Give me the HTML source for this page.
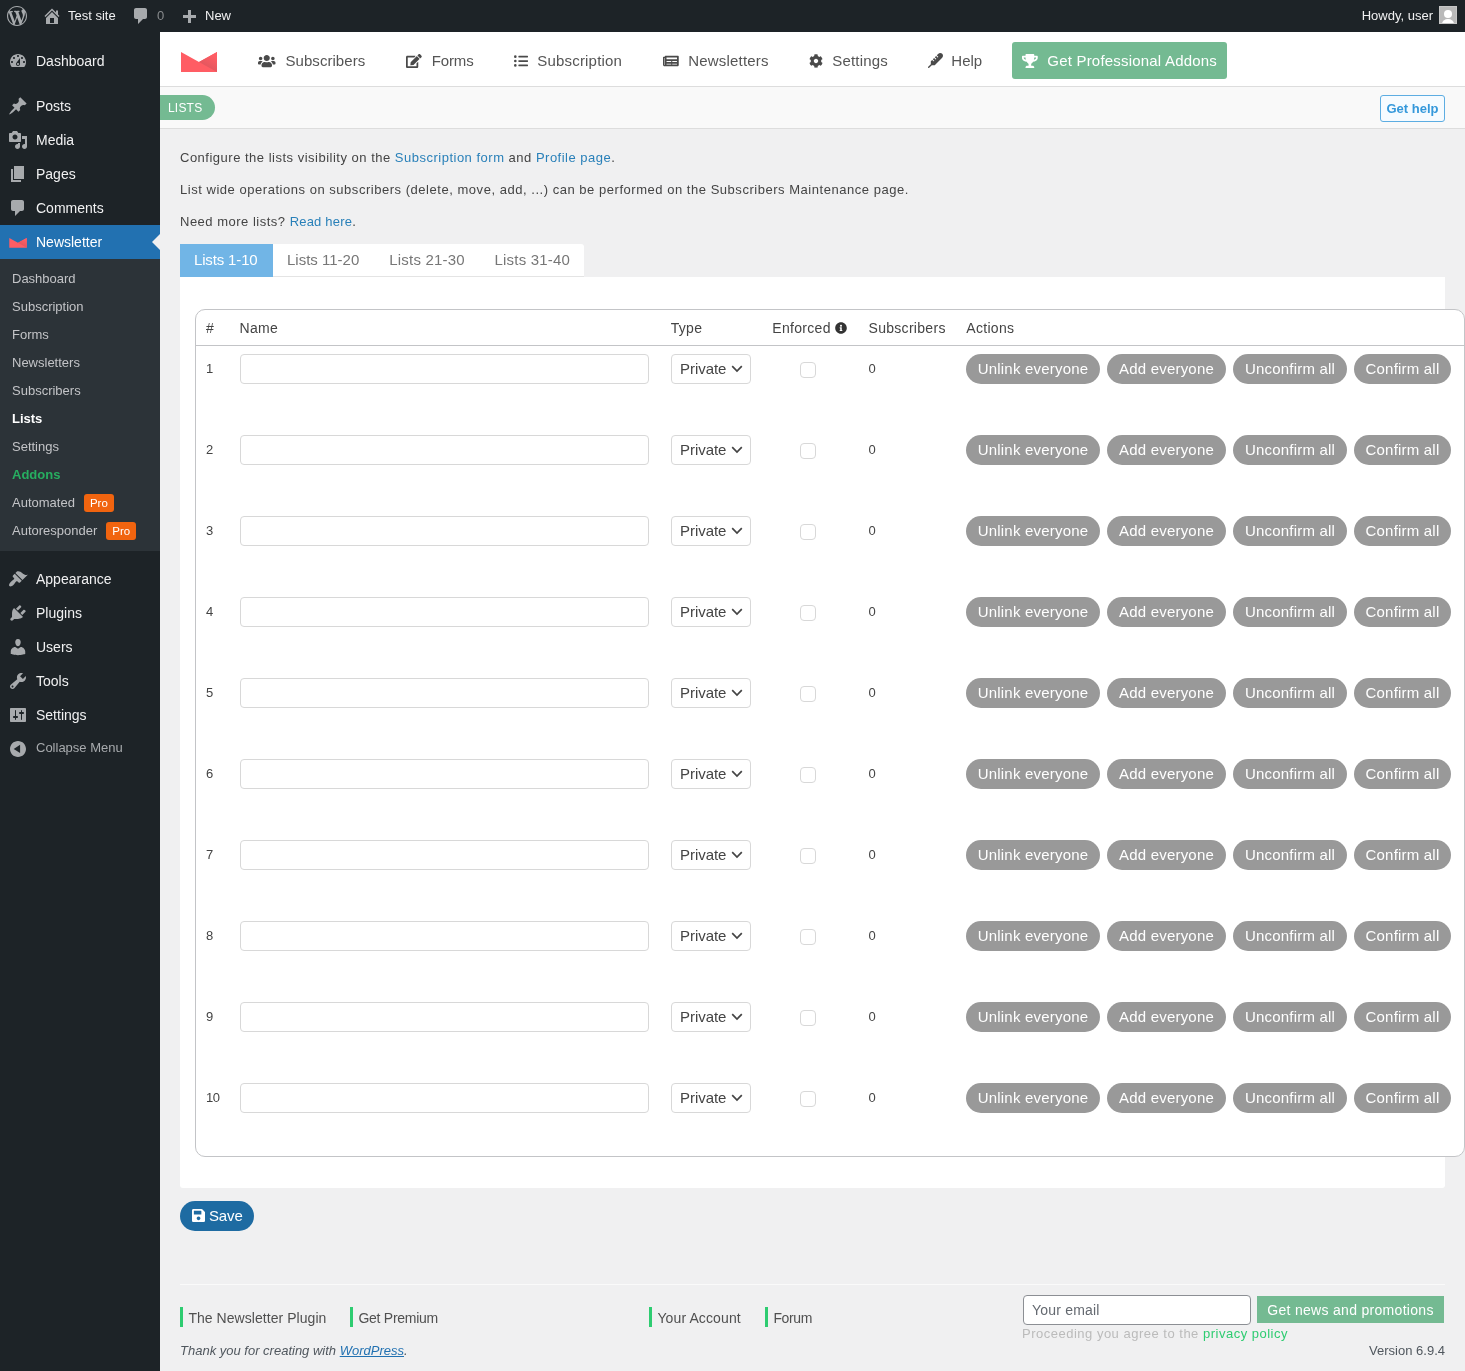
<!DOCTYPE html>
<html>
<head>
<meta charset="utf-8">
<title>Lists</title>
<style>
*{box-sizing:border-box;}
html,body{margin:0;padding:0;}
body{width:1465px;height:1371px;overflow:hidden;background:#f0f0f1;font-family:"Liberation Sans",sans-serif;font-size:13px;line-height:18px;color:#3c434a;position:relative;}
#w{position:absolute;left:0;top:0;width:1465px;height:1371px;will-change:transform;}
svg{display:block;}
.abs{position:absolute;}
#bar{position:absolute;left:0;top:0;width:1465px;height:32px;background:#1d2327;color:#f0f0f1;font-size:13px;line-height:32px;}
#bar .t{position:absolute;top:0;white-space:nowrap;}
#bar svg{fill:#a7aaad;}
#menu{position:absolute;left:0;top:32px;width:160px;height:1339px;background:#1d2327;}
.mi{position:absolute;left:0;width:160px;height:34px;color:#f0f0f1;font-size:14px;line-height:34px;}
.mi span{position:absolute;left:36px;top:0;white-space:nowrap;}
.mi svg{fill:#a7aaad;}
.mi.cur{background:#2271b1;color:#fff;}
#sub{position:absolute;left:0;top:227px;width:160px;height:292px;background:#2c3338;}
.si{position:absolute;left:12px;height:28px;line-height:28px;font-size:13px;color:#c3c4c7;white-space:nowrap;}
.pro{display:inline-block;background:#f1640f;color:#fff;font-size:11.5px;line-height:18px;height:18px;padding:0 6px;border-radius:3px;margin-left:9px;vertical-align:0px;}
#hdr{position:absolute;left:160px;top:32px;width:1305px;height:55px;background:#fff;border-bottom:1px solid #ddd;}
.hm{position:absolute;top:0;height:55px;line-height:57px;font-size:15px;color:#555;white-space:nowrap;letter-spacing:0.2px;}
#sh{position:absolute;left:160px;top:87px;width:1305px;height:42px;background:#f9f9f9;border-bottom:1px solid #ddd;}
.p{position:absolute;left:180px;font-size:13px;line-height:15px;color:#444;white-space:nowrap;letter-spacing:0.5px;}
.p a{color:#2980b9;}
.tab{top:244px;font-size:15px;line-height:32px;height:33px;color:#777;white-space:nowrap;letter-spacing:0.2px;}
.th{position:absolute;top:319px;font-size:14px;line-height:18px;color:#444;white-space:nowrap;letter-spacing:0.3px;}
.td{position:absolute;font-size:13px;line-height:20px;color:#444;white-space:nowrap;}
.inp{position:absolute;height:30px;border:1px solid #d8d8d8;border-radius:4px;background:#fff;}
.sel span{position:absolute;left:8px;top:0;font-size:15px;line-height:28px;color:#444;letter-spacing:-0.05px;}
.cb{position:absolute;width:16px;height:16px;border:1px solid #d8d8d8;border-radius:4px;background:#fff;}
.btn{position:absolute;height:30px;border-radius:15px;background:#999;color:#fff;font-size:15px;line-height:30px;text-align:center;white-space:nowrap;letter-spacing:0.2px;}
.fl{position:absolute;top:1308.5px;font-size:14px;line-height:19px;color:#505050;white-space:nowrap;letter-spacing:0.05px;}

</style>
</head>
<body>
<div id="w">
<div id="bar">
<svg viewBox="0 0 20 20" style="position:absolute;left:7px;top:6px;width:20px;height:20px;"><path d="M20 10c0-5.51-4.49-10-10-10C4.48 0 0 4.49 0 10c0 5.52 4.48 10 10 10 5.51 0 10-4.48 10-10zM7.78 15.37L4.37 6.22c.55-.02 1.17-.08 1.17-.08.5-.06.44-1.13-.06-1.11 0 0-1.45.11-2.37.11-.18 0-.37 0-.58-.01C4.12 2.69 6.87 1.11 10 1.11c2.33 0 4.45.87 6.05 2.34-.68-.11-1.65.39-1.65 1.58 0 .74.45 1.36.9 2.1.35.61.55 1.36.55 2.46 0 1.49-1.4 5-1.4 5l-3.03-8.37c.54-.02.82-.17.82-.17.5-.05.44-1.25-.06-1.22 0 0-1.44.12-2.38.12-.87 0-2.33-.12-2.33-.12-.5-.03-.56 1.2-.06 1.22l.92.08 1.26 3.41zM17.41 10c.24-.64.74-1.87.43-4.25.7 1.29 1.05 2.71 1.05 4.25 0 3.29-1.73 6.24-4.4 7.78.97-2.59 1.94-5.2 2.92-7.78zM6.1 18.09C3.12 16.65 1.11 13.53 1.11 10c0-1.3.23-2.48.72-3.59C3.25 10.3 4.67 14.2 6.1 18.09zm4.03-6.63l2.58 6.98c-.86.29-1.76.45-2.71.45-.79 0-1.57-.11-2.29-.33.81-2.38 1.62-4.74 2.42-7.1z"/></svg>
<svg viewBox="0 0 20 20" style="position:absolute;left:42px;top:6px;width:20px;height:20px;"><path d="M16 8.5l1.53 1.53-1.06 1.06L10 4.62l-6.47 6.47-1.06-1.06L10 2.5l4 4v-2h2v4zm-6-2.46l6 5.99V18H4v-5.97zM12 17v-5H8v5h4z"/></svg>
<span class="t" style="left:68px">Test site</span>
<svg viewBox="0 0 20 20" style="position:absolute;left:131px;top:6px;width:20px;height:20px;"><path d="M5 2h9c1.1 0 2 .9 2 2v7c0 1.1-.9 2-2 2h-2l-5 5v-5H5c-1.1 0-2-.9-2-2V4c0-1.1.9-2 2-2z"/></svg>
<span class="t" style="left:157px;color:#878a8c">0</span>
<svg viewBox="0 0 20 20" style="position:absolute;left:179px;top:8px;width:20px;height:20px;"><path d="M17 7v3h-5v5H9v-5H4V7h5V2h3v5h5z"/></svg>
<span class="t" style="left:205px">New</span>
<span class="t" style="right:32px">Howdy, user</span>
<div class="abs" style="left:1439px;top:6px;width:18px;height:18px;background:#b9b9b9;border:1px solid #c6c6c6;overflow:hidden"><div class="abs" style="left:3.9px;top:3.4px;width:7.8px;height:7.8px;border-radius:50%;background:#fff"></div><div class="abs" style="left:1.6px;top:12.2px;width:12.4px;height:10px;border-radius:50%;background:#fff"></div></div>
</div>
<div id="menu">
<div class="mi" style="top:12px"><svg viewBox="0 0 20 20" style="position:absolute;left:8px;top:7px;width:20px;height:20px;"><path d="M3.76 16h12.48c1.1-1.37 1.76-3.11 1.76-5 0-4.42-3.58-8-8-8s-8 3.58-8 8c0 1.89.66 3.63 1.76 5zM10 4c.55 0 1 .45 1 1s-.45 1-1 1-1-.45-1-1 .45-1 1-1zM6 6c.55 0 1 .45 1 1s-.45 1-1 1-1-.45-1-1 .45-1 1-1zm8 0c.55 0 1 .45 1 1s-.45 1-1 1-1-.45-1-1 .45-1 1-1zm-5.37 5.55L12 7v6c0 1.1-.9 2-2 2s-2-.9-2-2c0-.57.24-1.08.63-1.45zM4 10c.55 0 1 .45 1 1s-.45 1-1 1-1-.45-1-1 .45-1 1-1zm12 0c.55 0 1 .45 1 1s-.45 1-1 1-1-.45-1-1 .45-1 1-1zm-5 3c0-.55-.45-1-1-1s-1 .45-1 1 .45 1 1 1 1-.45 1-1z"/></svg><span>Dashboard</span></div>
<div class="mi" style="top:57px"><svg viewBox="0 0 20 20" style="position:absolute;left:8px;top:7px;width:20px;height:20px;"><path d="M10.44 3.02l1.82-1.82 6.36 6.35-1.83 1.82c-1.05-.68-2.48-.57-3.41.36l-.75.75c-.92.93-1.04 2.35-.35 3.41l-1.83 1.82-2.41-2.41-2.8 2.79c-.42.42-3.38 2.71-3.8 2.29s1.86-3.39 2.28-3.81l2.79-2.79L4.1 9.36l1.83-1.82c1.05.69 2.48.57 3.4-.36l.75-.75c.93-.92 1.05-2.35.36-3.41z"/></svg><span>Posts</span></div>
<div class="mi" style="top:91px"><svg viewBox="0 0 20 20" style="position:absolute;left:8px;top:7px;width:20px;height:20px;"><path d="M13 11V4c0-.55-.45-1-1-1h-1.67L9 1H5L3.67 3H2c-.55 0-1 .45-1 1v7c0 .55.45 1 1 1h10c.55 0 1-.45 1-1zM7 4.5c1.38 0 2.5 1.12 2.5 2.5S8.38 9.5 7 9.5 4.5 8.38 4.5 7 5.62 4.5 7 4.5zM14 6h5v10.5c0 1.38-1.12 2.5-2.5 2.5S14 17.88 14 16.5s1.12-2.5 2.5-2.5c.17 0 .34.02.5.05V9h-3V6zm-4 8.05V13h2v3.500c0 1.380-1.120 2.500-2.500 2.500S7 17.880 7 16.500 8.120 14 9.500 14c.170 0 .340.020.500.050z"/></svg><span>Media</span></div>
<div class="mi" style="top:125px"><svg viewBox="0 0 20 20" style="position:absolute;left:8px;top:7px;width:20px;height:20px;"><path d="M6 15V2h10v13H6zm-1 1h8v2H3V5h2v11z"/></svg><span>Pages</span></div>
<div class="mi" style="top:159px"><svg viewBox="0 0 20 20" style="position:absolute;left:8px;top:7px;width:20px;height:20px;"><path d="M5 2h9c1.1 0 2 .9 2 2v7c0 1.1-.9 2-2 2h-2l-5 5v-5H5c-1.1 0-2-.9-2-2V4c0-1.1.9-2 2-2z"/></svg><span>Comments</span></div>
<div class="mi cur" style="top:193px"><svg viewBox="0 0 36 20" style="position:absolute;left:9px;top:13.4px;width:18px;height:9.7px"><path d="M0 0L18 10L36 0V20H0Z" fill="#ff5d64"/><path d="M18 10L36 0V20Z" fill="url(#lg)"/></svg><span>Newsletter</span><div class="abs" style="right:0;top:9px;width:0;height:0;border:8px solid transparent;border-right-color:#f0f0f1"></div></div>
<div id="sub">
<div class="si" style="top:6px;">Dashboard</div>
<div class="si" style="top:34px;">Subscription</div>
<div class="si" style="top:62px;">Forms</div>
<div class="si" style="top:90px;">Newsletters</div>
<div class="si" style="top:118px;">Subscribers</div>
<div class="si" style="top:146px;color:#fff;font-weight:bold;">Lists</div>
<div class="si" style="top:174px;">Settings</div>
<div class="si" style="top:202px;color:#27ae60;font-weight:bold;">Addons</div>
<div class="si" style="top:230px;">Automated<span class="pro">Pro</span></div>
<div class="si" style="top:258px;">Autoresponder<span class="pro">Pro</span></div>
</div>
<div class="mi" style="top:530px"><svg viewBox="0 0 20 20" style="position:absolute;left:8px;top:7px;width:20px;height:20px;"><path d="M14.480 11.060L7.410 3.990l1.500-1.500c.5-.56 2.300-.47 3.510.32 1.210.8 1.430 1.280 2.910 2.100 1.180.64 2.450 1.260 4.450.85zm-.71.71L6.700 4.700 4.930 6.470c-.39.39-.39 1.020 0 1.410l1.060 1.060c.39.39.39 1.030 0 1.420-.6.6-1.430 1.110-2.210 1.690-.35.26-.7.53-1.010.84C1.430 14.230.4 16.080 1.400 17.070c.99 1 2.840-.03 4.180-1.360.31-.31.58-.66.85-1.020.57-.78 1.080-1.610 1.690-2.210.39-.39 1.020-.39 1.410 0l1.060 1.060c.39.39 1.020.39 1.410 0z"/></svg><span>Appearance</span></div>
<div class="mi" style="top:564px"><svg viewBox="0 0 20 20" style="position:absolute;left:8px;top:7px;width:20px;height:20px;"><path d="M13.110 4.360L9.870 7.600 8 5.730l3.240-3.240c.35-.34 1.050-.2 1.560.32.52.51.66 1.210.31 1.550zm-8 1.770l.91-1.120 9.010 9.010-1.190.84c-.71.71-2.630 1.160-3.820 1.160H6.140L4.900 17.260c-.59.59-1.540.59-2.120 0-.59-.58-.59-1.530 0-2.120l1.240-1.240v-3.880c0-1.130.4-3.190 1.090-3.890zm7.260 3.970l3.240-3.240c.34-.35 1.040-.21 1.550.31.52.51.66 1.210.31 1.550l-3.240 3.250z"/></svg><span>Plugins</span></div>
<div class="mi" style="top:598px"><svg viewBox="0 0 20 20" style="position:absolute;left:8px;top:7px;width:20px;height:20px;"><path d="M10 9.250c-2.270 0-2.730-3.440-2.730-3.440C7 4.020 7.820 2 9.970 2c2.160 0 2.980 2.020 2.710 3.810 0 0-.41 3.440-2.680 3.440zm0 2.570L12.720 10c2.390 0 4.520 2.330 4.520 4.530v2.490s-3.650 1.130-7.240 1.130c-3.650 0-7.240-1.130-7.240-1.130v-2.490c0-2.250 1.940-4.480 4.470-4.480z"/></svg><span>Users</span></div>
<div class="mi" style="top:632px"><svg viewBox="0 0 20 20" style="position:absolute;left:8px;top:7px;width:20px;height:20px;"><path d="M16.680 9.770c-1.340 1.340-3.300 1.670-4.950.99l-5.410 6.520c-.99.99-2.590.99-3.580 0s-.99-2.590 0-3.570l6.520-5.420c-.68-1.650-.35-3.610.99-4.950 1.280-1.280 3.120-1.620 4.720-1.060l-2.890 2.890 2.820 2.820 2.860-2.870c.53 1.580.18 3.390-1.080 4.650zM3.810 16.210c.4.39 1.040.39 1.430 0 .4-.4.4-1.040 0-1.430-.39-.4-1.030-.4-1.430 0-.39.39-.39 1.030 0 1.430z"/></svg><span>Tools</span></div>
<div class="mi" style="top:666px"><svg viewBox="0 0 20 20" style="position:absolute;left:8px;top:7px;width:20px;height:20px;"><path d="M18 16V4c0-.55-.45-1-1-1H3c-.55 0-1 .45-1 1v12c0 .55.45 1 1 1h14c.55 0 1-.45 1-1zM8 11h1c.55 0 1 .45 1 1s-.45 1-1 1H8v1.500c0 .28-.22.5-.5.5s-.5-.22-.5-.5V13H6c-.55 0-1-.45-1-1s.45-1 1-1h1V5.500c0-.28.22-.5.5-.5s.5.22.5.5V11zm5-2h-1c-.55 0-1-.45-1-1s.45-1 1-1h1V5.500c0-.28.22-.5.5-.5s.5.22.5.5V7h1c.55 0 1 .45 1 1s-.45 1-1 1h-1v5.500c0 .28-.22.5-.5.5s-.5-.22-.5-.5V9z"/></svg><span>Settings</span></div>
<div class="mi" style="top:699px;color:#a7aaad;font-size:13px"><svg viewBox="0 0 20 20" style="position:absolute;left:8px;top:8px;width:20px;height:20px;"><path d="M10 2.02c-4.42 0-8 3.58-8 8s3.58 8 8 8 8-3.58 8-8-3.58-8-8-8zM12.1 14l-6.4-4.1 6.4-4.1v8.2z"/></svg><span>Collapse Menu</span></div>
</div>
<div id="hdr">
<svg viewBox="0 0 36 20" style="position:absolute;left:21px;top:20px;width:36px;height:20px"><defs><linearGradient id="lg" gradientUnits="userSpaceOnUse" x1="27" y1="15" x2="33" y2="4"><stop offset="0" stop-color="#e4575f"/><stop offset="1" stop-color="#ff5d64"/></linearGradient></defs><path d="M0 0L18 10L36 0V20H0Z" fill="#ff5d64"/><path d="M18 10L36 0V20Z" fill="url(#lg)"/></svg>
<svg viewBox="0 0 640 512" style="position:absolute;left:98px;top:21.5px;width:17.5px;height:14px;fill:#4a4a4a;"><path d="M96 224c35.300 0 64-28.700 64-64s-28.700-64-64-64-64 28.700-64 64 28.700 64 64 64zm448 0c35.300 0 64-28.700 64-64s-28.700-64-64-64-64 28.700-64 64 28.700 64 64 64zm32 32h-64c-17.600 0-33.500 7.100-45.100 18.600 40.300 22.100 68.900 62 75.100 109.400h66c17.700 0 32-14.300 32-32v-32c0-35.300-28.700-64-64-64zm-256 0c61.900 0 112-50.100 112-112S381.900 32 320 32 208 82.100 208 144s50.100 112 112 112zm76.800 32h-8.300c-20.800 10-43.900 16-68.500 16s-47.600-6-68.500-16h-8.300C179.600 288 128 339.600 128 403.200V432c0 26.500 21.500 48 48 48h288c26.500 0 48-21.500 48-48v-28.800c0-63.600-51.600-115.200-115.200-115.200zm-223.700-13.400C161.500 263.100 145.600 256 128 256H64c-35.300 0-64 28.700-64 64v32c0 17.700 14.300 32 32 32h65.900c6.300-47.400 34.900-87.300 75.200-109.400z"/></svg>
<span class="hm" style="left:125.5px;letter-spacing:0.05px">Subscribers</span>
<svg viewBox="0 0 576 512" style="position:absolute;left:246px;top:21.5px;width:15.75px;height:14px;fill:#4a4a4a;"><path d="M402.600 83.200l90.200 90.200c3.800 3.800 3.800 10 0 13.800L274.400 405.600l-92.800 10.300c-12.400 1.400-22.900-9.100-21.500-21.500l10.300-92.800L388.800 83.200c3.800-3.800 10-3.800 13.800 0zm162-22.900l-48.800-48.800c-15.200-15.200-39.900-15.200-55.200 0l-35.400 35.400c-3.800 3.800-3.800 10 0 13.800l90.200 90.200c3.800 3.800 10 3.800 13.800 0l35.400-35.400c15.200-15.300 15.200-40 0-55.200zM384 346.200V448H64V128h229.800c3.200 0 6.200-1.300 8.500-3.500l40-40c7.600-7.600 2.200-20.500-8.500-20.500H48C21.500 64 0 85.500 0 112v352c0 26.500 21.500 48 48 48h352c26.500 0 48-21.500 48-48V306.200c0-10.700-12.900-16-20.500-8.500l-40 40c-2.200 2.300-3.500 5.300-3.500 8.500z"/></svg>
<span class="hm" style="left:271.7px;letter-spacing:-0.12px">Forms</span>
<svg viewBox="0 0 512 512" style="position:absolute;left:354px;top:21.5px;width:14.0px;height:14px;fill:#4a4a4a;"><path d="M48 48a48 48 0 1 0 48 48 48 48 0 0 0-48-48zm0 160a48 48 0 1 0 48 48 48 48 0 0 0-48-48zm0 160a48 48 0 1 0 48 48 48 48 0 0 0-48-48zm448 16H176a16 16 0 0 0-16 16v32a16 16 0 0 0 16 16h320a16 16 0 0 0 16-16v-32a16 16 0 0 0-16-16zm0-320H176a16 16 0 0 0-16 16v32a16 16 0 0 0 16 16h320a16 16 0 0 0 16-16V80a16 16 0 0 0-16-16zm0 160H176a16 16 0 0 0-16 16v32a16 16 0 0 0 16 16h320a16 16 0 0 0 16-16v-32a16 16 0 0 0-16-16z"/></svg>
<span class="hm" style="left:377.20000000000005px;letter-spacing:0.2px">Subscription</span>
<svg viewBox="0 0 576 512" style="position:absolute;left:503px;top:21.5px;width:15.75px;height:14px;fill:#4a4a4a;"><path d="M552 64H88c-13.255 0-24 10.745-24 24v8H24c-13.255 0-24 10.745-24 24v272c0 30.928 25.072 56 56 56h472c26.510 0 48-21.490 48-48V88c0-13.255-10.745-24-24-24zM56 400a8 8 0 0 1-8-8V144h16v248a8 8 0 0 1-8 8zm236-16H140c-6.627 0-12-5.373-12-12v-8c0-6.627 5.373-12 12-12h152c6.627 0 12 5.373 12 12v8c0 6.627-5.373 12-12 12zm208 0H348c-6.627 0-12-5.373-12-12v-8c0-6.627 5.373-12 12-12h152c6.627 0 12 5.373 12 12v8c0 6.627-5.373 12-12 12zm-208-96H140c-6.627 0-12-5.373-12-12v-8c0-6.627 5.373-12 12-12h152c6.627 0 12 5.373 12 12v8c0 6.627-5.373 12-12 12zm208 0H348c-6.627 0-12-5.373-12-12v-8c0-6.627 5.373-12 12-12h152c6.627 0 12 5.373 12 12v8c0 6.627-5.373 12-12 12zm0-96H140c-6.627 0-12-5.373-12-12v-40c0-6.627 5.373-12 12-12h360c6.627 0 12 5.373 12 12v40c0 6.627-5.373 12-12 12z"/></svg>
<span class="hm" style="left:528.2px;letter-spacing:0.2px">Newsletters</span>
<svg viewBox="0 0 512 512" style="position:absolute;left:649px;top:21.5px;width:14.0px;height:14px;fill:#4a4a4a;"><path d="M487.400 315.700l-42.600-24.600c4.300-23.200 4.300-47 0-70.200l42.600-24.600c4.900-2.800 7.100-8.600 5.500-14-11.100-35.600-30-67.800-54.700-94.600-3.800-4.100-10-5.100-14.800-2.300L380.800 110c-17.900-15.400-38.500-27.300-60.800-35.100V25.800c0-5.600-3.900-10.500-9.400-11.700-36.700-8.200-74.300-7.800-109.200 0-5.500 1.200-9.400 6.100-9.400 11.700V75c-22.200 7.900-42.800 19.800-60.800 35.100L88.700 85.500c-4.900-2.800-11-1.900-14.800 2.300-24.700 26.700-43.600 58.900-54.700 94.600-1.700 5.400.6 11.200 5.500 14L67.300 221c-4.300 23.200-4.300 47 0 70.200l-42.600 24.600c-4.900 2.800-7.100 8.600-5.500 14 11.100 35.600 30 67.800 54.700 94.600 3.800 4.100 10 5.100 14.800 2.300l42.600-24.600c17.900 15.400 38.500 27.300 60.800 35.100v49.200c0 5.600 3.900 10.500 9.400 11.700 36.700 8.200 74.300 7.800 109.200 0 5.500-1.200 9.400-6.100 9.400-11.700v-49.200c22.200-7.900 42.800-19.800 60.800-35.100l42.600 24.600c4.900 2.800 11 1.900 14.800-2.300 24.700-26.700 43.600-58.900 54.700-94.600 1.500-5.500-.7-11.300-5.600-14.100zM256 336c-44.100 0-80-35.900-80-80s35.900-80 80-80 80 35.900 80 80-35.900 80-80 80z"/></svg>
<span class="hm" style="left:672.2px;letter-spacing:0.2px">Settings</span>
<svg viewBox="0 0 512 512" style="position:absolute;left:767.8px;top:20.8px;width:15.0px;height:15px;fill:#4a4a4a;"><path d="M476.8 20.4c-37.5-30.7-95.5-26.3-131.9 10.2l-45.7 46 50.5 50.5c3.100 3.100 3.100 8.200 0 11.300l-11.300 11.300c-3.100 3.100-8.200 3.100-11.300 0l-50.400-50.500-45.100 45.400 50.300 50.400c3.100 3.100 3.100 8.200 0 11.300l-11.300 11.300c-3.100 3.100-8.200 3.100-11.300 0L209 167.400l-45.100 45.400L214 263c3.100 3.100 3.100 8.200 0 11.300l-11.300 11.300c-3.100 3.100-8.200 3.100-11.300 0l-50.100-50.200L96 281.100V382L7 471c-9.400 9.400-9.400 24.600 0 33.900 9.400 9.400 24.600 9.400 33.900 0l89-89h99.900L484 162.600c34.900-34.900 42.200-101.500-7.200-142.200z"/></svg>
<span class="hm" style="left:791.3px;letter-spacing:0.0px">Help</span>
<div class="abs" style="left:852px;top:10px;width:215px;height:37px;background:#74ba92;border-radius:3px;color:#fff;font-size:15px;line-height:37px;white-space:nowrap"><svg viewBox="0 0 576 512" style="position:absolute;left:10.1px;top:12px;width:15.75px;height:14px;fill:#fff;"><path d="M552 64H448V24c0-13.300-10.700-24-24-24H152c-13.300 0-24 10.700-24 24v40H24C10.700 64 0 74.700 0 88v56c0 35.700 22.500 72.400 61.900 100.700 31.500 22.700 69.800 37.100 110 41.700C203.300 338.500 240 360 240 360v72h-48c-35.300 0-64 20.700-64 56v12c0 6.600 5.400 12 12 12h296c6.600 0 12-5.400 12-12v-12c0-35.300-28.700-56-64-56h-48v-72s36.700-21.500 68.100-73.600c40.300-4.600 78.600-19 110-41.700 39.300-28.300 61.900-65 61.900-100.700V88c0-13.300-10.700-24-24-24zM99.300 192.800C74.900 175.200 64 155.600 64 144v-16h64.200c1 32.600 5.800 61.200 12.800 86.200-15.100-5.200-29.200-12.400-41.700-21.400zM512 144c0 16.100-17.700 36.100-35.300 48.800-12.500 9-26.700 16.200-41.800 21.400 7-25 11.800-53.600 12.800-86.200H512v16z"/></svg><span class="abs" style="left:35.3px;top:0;letter-spacing:0.2px">Get Professional Addons</span></div>
</div>
<div id="sh"><div class="abs" style="left:0;top:8px;width:55px;height:25px;background:#74ba92;border-radius:0 13px 13px 0;color:#fff;font-size:12px;line-height:26px;padding-left:8px;letter-spacing:0.2px">LISTS</div><div class="abs" style="left:1220px;top:8px;width:65px;height:27px;border:1px solid #5dade2;border-radius:3px;background:#f6fbff;color:#3498db;font-weight:bold;font-size:13px;line-height:25px;text-align:center">Get help</div></div>
<div class="p" style="top:150px">Configure the lists visibility on the <a>Subscription form</a> and <a>Profile page</a>.</div>
<div class="p" style="top:182px;letter-spacing:0.53px">List wide operations on subscribers (delete, move, add, ...) can be performed on the Subscribers Maintenance page.</div>
<div class="p" style="top:214px">Need more lists? <a style="letter-spacing:0.2px">Read here</a>.</div>
<div class="abs" style="left:180px;top:244px;width:404px;height:33px;background:#fff;border-bottom:1px solid #e4e4e4;border-radius:0 3px 0 0"></div>
<div class="abs" style="left:180px;top:244px;width:93px;height:33px;background:#71b5e6"></div>
<div class="abs tab" style="left:194px;letter-spacing:-0.15px;color:#fff">Lists 1-10</div>
<div class="abs tab" style="left:287px;letter-spacing:0px">Lists 11-20</div>
<div class="abs tab" style="left:389.3px">Lists 21-30</div>
<div class="abs tab" style="left:494.5px">Lists 31-40</div>
<div class="abs" style="left:180px;top:277px;width:1265px;height:911px;background:#fff;border-radius:0 0 3px 3px"></div>
<div class="abs" style="left:195px;top:309px;width:1270px;height:848px;border:1px solid #c3c4c7;border-radius:10px;background:#fff"></div>
<div class="abs" style="left:196px;top:345px;width:1268px;height:1px;background:#c3c4c7"></div>
<div class="th" style="left:206px">#</div>
<div class="th" style="left:239.5px">Name</div>
<div class="th" style="left:670.7px">Type</div>
<div class="th" style="left:772.3px">Enforced</div>
<div class="th" style="left:868.5px">Subscribers</div>
<div class="th" style="left:966.3px">Actions</div>
<svg viewBox="0 0 512 512" style="position:absolute;left:835px;top:322px;width:12.0px;height:12px;fill:#333;"><path d="M256 8C119.043 8 8 119.083 8 256c0 136.997 111.043 248 248 248s248-111.003 248-248C504 119.083 392.957 8 256 8zm0 110c23.196 0 42 18.804 42 42s-18.804 42-42 42-42-18.804-42-42 18.804-42 42-42zm56 254c0 6.627-5.373 12-12 12h-88c-6.627 0-12-5.373-12-12v-24c0-6.627 5.373-12 12-12h12v-64h-12c-6.627 0-12-5.373-12-12v-24c0-6.627 5.373-12 12-12h64c6.627 0 12 5.373 12 12v100h12c6.627 0 12 5.373 12 12v24z"/></svg>
<div class="td" style="left:206px;top:359px">1</div>
<div class="inp" style="left:240px;top:354px;width:409px"></div>
<div class="inp sel" style="left:671px;top:354px;width:80px"><span>Private</span><svg viewBox="0 0 12 8" style="position:absolute;left:59px;top:9.5px;width:12px;height:8px"><path d="M1.2 1.2L6 6L10.8 1.2" fill="none" stroke="#444" stroke-width="1.7"/></svg></div>
<div class="cb" style="left:800px;top:362px"></div>
<div class="td" style="left:868.6px;top:359px">0</div>
<div class="btn" style="left:966px;top:354px;width:134px">Unlink everyone</div>
<div class="btn" style="left:1107px;top:354px;width:119px">Add everyone</div>
<div class="btn" style="left:1233px;top:354px;width:114px">Unconfirm all</div>
<div class="btn" style="left:1354px;top:354px;width:97px">Confirm all</div>
<div class="td" style="left:206px;top:440px">2</div>
<div class="inp" style="left:240px;top:435px;width:409px"></div>
<div class="inp sel" style="left:671px;top:435px;width:80px"><span>Private</span><svg viewBox="0 0 12 8" style="position:absolute;left:59px;top:9.5px;width:12px;height:8px"><path d="M1.2 1.2L6 6L10.8 1.2" fill="none" stroke="#444" stroke-width="1.7"/></svg></div>
<div class="cb" style="left:800px;top:443px"></div>
<div class="td" style="left:868.6px;top:440px">0</div>
<div class="btn" style="left:966px;top:435px;width:134px">Unlink everyone</div>
<div class="btn" style="left:1107px;top:435px;width:119px">Add everyone</div>
<div class="btn" style="left:1233px;top:435px;width:114px">Unconfirm all</div>
<div class="btn" style="left:1354px;top:435px;width:97px">Confirm all</div>
<div class="td" style="left:206px;top:521px">3</div>
<div class="inp" style="left:240px;top:516px;width:409px"></div>
<div class="inp sel" style="left:671px;top:516px;width:80px"><span>Private</span><svg viewBox="0 0 12 8" style="position:absolute;left:59px;top:9.5px;width:12px;height:8px"><path d="M1.2 1.2L6 6L10.8 1.2" fill="none" stroke="#444" stroke-width="1.7"/></svg></div>
<div class="cb" style="left:800px;top:524px"></div>
<div class="td" style="left:868.6px;top:521px">0</div>
<div class="btn" style="left:966px;top:516px;width:134px">Unlink everyone</div>
<div class="btn" style="left:1107px;top:516px;width:119px">Add everyone</div>
<div class="btn" style="left:1233px;top:516px;width:114px">Unconfirm all</div>
<div class="btn" style="left:1354px;top:516px;width:97px">Confirm all</div>
<div class="td" style="left:206px;top:602px">4</div>
<div class="inp" style="left:240px;top:597px;width:409px"></div>
<div class="inp sel" style="left:671px;top:597px;width:80px"><span>Private</span><svg viewBox="0 0 12 8" style="position:absolute;left:59px;top:9.5px;width:12px;height:8px"><path d="M1.2 1.2L6 6L10.8 1.2" fill="none" stroke="#444" stroke-width="1.7"/></svg></div>
<div class="cb" style="left:800px;top:605px"></div>
<div class="td" style="left:868.6px;top:602px">0</div>
<div class="btn" style="left:966px;top:597px;width:134px">Unlink everyone</div>
<div class="btn" style="left:1107px;top:597px;width:119px">Add everyone</div>
<div class="btn" style="left:1233px;top:597px;width:114px">Unconfirm all</div>
<div class="btn" style="left:1354px;top:597px;width:97px">Confirm all</div>
<div class="td" style="left:206px;top:683px">5</div>
<div class="inp" style="left:240px;top:678px;width:409px"></div>
<div class="inp sel" style="left:671px;top:678px;width:80px"><span>Private</span><svg viewBox="0 0 12 8" style="position:absolute;left:59px;top:9.5px;width:12px;height:8px"><path d="M1.2 1.2L6 6L10.8 1.2" fill="none" stroke="#444" stroke-width="1.7"/></svg></div>
<div class="cb" style="left:800px;top:686px"></div>
<div class="td" style="left:868.6px;top:683px">0</div>
<div class="btn" style="left:966px;top:678px;width:134px">Unlink everyone</div>
<div class="btn" style="left:1107px;top:678px;width:119px">Add everyone</div>
<div class="btn" style="left:1233px;top:678px;width:114px">Unconfirm all</div>
<div class="btn" style="left:1354px;top:678px;width:97px">Confirm all</div>
<div class="td" style="left:206px;top:764px">6</div>
<div class="inp" style="left:240px;top:759px;width:409px"></div>
<div class="inp sel" style="left:671px;top:759px;width:80px"><span>Private</span><svg viewBox="0 0 12 8" style="position:absolute;left:59px;top:9.5px;width:12px;height:8px"><path d="M1.2 1.2L6 6L10.8 1.2" fill="none" stroke="#444" stroke-width="1.7"/></svg></div>
<div class="cb" style="left:800px;top:767px"></div>
<div class="td" style="left:868.6px;top:764px">0</div>
<div class="btn" style="left:966px;top:759px;width:134px">Unlink everyone</div>
<div class="btn" style="left:1107px;top:759px;width:119px">Add everyone</div>
<div class="btn" style="left:1233px;top:759px;width:114px">Unconfirm all</div>
<div class="btn" style="left:1354px;top:759px;width:97px">Confirm all</div>
<div class="td" style="left:206px;top:845px">7</div>
<div class="inp" style="left:240px;top:840px;width:409px"></div>
<div class="inp sel" style="left:671px;top:840px;width:80px"><span>Private</span><svg viewBox="0 0 12 8" style="position:absolute;left:59px;top:9.5px;width:12px;height:8px"><path d="M1.2 1.2L6 6L10.8 1.2" fill="none" stroke="#444" stroke-width="1.7"/></svg></div>
<div class="cb" style="left:800px;top:848px"></div>
<div class="td" style="left:868.6px;top:845px">0</div>
<div class="btn" style="left:966px;top:840px;width:134px">Unlink everyone</div>
<div class="btn" style="left:1107px;top:840px;width:119px">Add everyone</div>
<div class="btn" style="left:1233px;top:840px;width:114px">Unconfirm all</div>
<div class="btn" style="left:1354px;top:840px;width:97px">Confirm all</div>
<div class="td" style="left:206px;top:926px">8</div>
<div class="inp" style="left:240px;top:921px;width:409px"></div>
<div class="inp sel" style="left:671px;top:921px;width:80px"><span>Private</span><svg viewBox="0 0 12 8" style="position:absolute;left:59px;top:9.5px;width:12px;height:8px"><path d="M1.2 1.2L6 6L10.8 1.2" fill="none" stroke="#444" stroke-width="1.7"/></svg></div>
<div class="cb" style="left:800px;top:929px"></div>
<div class="td" style="left:868.6px;top:926px">0</div>
<div class="btn" style="left:966px;top:921px;width:134px">Unlink everyone</div>
<div class="btn" style="left:1107px;top:921px;width:119px">Add everyone</div>
<div class="btn" style="left:1233px;top:921px;width:114px">Unconfirm all</div>
<div class="btn" style="left:1354px;top:921px;width:97px">Confirm all</div>
<div class="td" style="left:206px;top:1007px">9</div>
<div class="inp" style="left:240px;top:1002px;width:409px"></div>
<div class="inp sel" style="left:671px;top:1002px;width:80px"><span>Private</span><svg viewBox="0 0 12 8" style="position:absolute;left:59px;top:9.5px;width:12px;height:8px"><path d="M1.2 1.2L6 6L10.8 1.2" fill="none" stroke="#444" stroke-width="1.7"/></svg></div>
<div class="cb" style="left:800px;top:1010px"></div>
<div class="td" style="left:868.6px;top:1007px">0</div>
<div class="btn" style="left:966px;top:1002px;width:134px">Unlink everyone</div>
<div class="btn" style="left:1107px;top:1002px;width:119px">Add everyone</div>
<div class="btn" style="left:1233px;top:1002px;width:114px">Unconfirm all</div>
<div class="btn" style="left:1354px;top:1002px;width:97px">Confirm all</div>
<div class="td" style="left:206px;top:1088px;letter-spacing:-0.6px">10</div>
<div class="inp" style="left:240px;top:1083px;width:409px"></div>
<div class="inp sel" style="left:671px;top:1083px;width:80px"><span>Private</span><svg viewBox="0 0 12 8" style="position:absolute;left:59px;top:9.5px;width:12px;height:8px"><path d="M1.2 1.2L6 6L10.8 1.2" fill="none" stroke="#444" stroke-width="1.7"/></svg></div>
<div class="cb" style="left:800px;top:1091px"></div>
<div class="td" style="left:868.6px;top:1088px">0</div>
<div class="btn" style="left:966px;top:1083px;width:134px">Unlink everyone</div>
<div class="btn" style="left:1107px;top:1083px;width:119px">Add everyone</div>
<div class="btn" style="left:1233px;top:1083px;width:114px">Unconfirm all</div>
<div class="btn" style="left:1354px;top:1083px;width:97px">Confirm all</div>
<div class="abs" style="left:180px;top:1201px;width:74px;height:30px;border-radius:15px;background:#1e6ba2;color:#fff;font-size:15px;line-height:30px"><svg viewBox="0 0 448 512" style="position:absolute;left:11.9px;top:7.1px;width:13.12px;height:15px;fill:#fff;"><path d="M433.941 129.941l-83.882-83.882A48 48 0 0 0 316.118 32H48C21.490 32 0 53.490 0 80v352c0 26.510 21.490 48 48 48h352c26.510 0 48-21.490 48-48V163.882a48 48 0 0 0-14.059-33.941zM224 416c-35.346 0-64-28.654-64-64 0-35.346 28.654-64 64-64s64 28.654 64 64c0 35.346-28.654 64-64 64zm96-304.520V212c0 6.627-5.373 12-12 12H76c-6.627 0-12-5.373-12-12V108c0-6.627 5.373-12 12-12h228.520c3.183 0 6.235 1.264 8.485 3.515l3.480 3.480A11.996 11.996 0 0 1 320 111.480z"/></svg><span class="abs" style="left:29px;top:0;letter-spacing:-0.15px">Save</span></div>
<div class="abs" style="left:180px;top:1284px;width:1265px;height:1px;background:#fafafa"></div>
<div class="abs" style="left:180px;top:1307px;width:3px;height:20px;background:#2ecc71"></div>
<div class="fl" style="left:188.4px;letter-spacing:0.05px">The Newsletter Plugin</div>
<div class="abs" style="left:350px;top:1307px;width:3px;height:20px;background:#2ecc71"></div>
<div class="fl" style="left:358.4px;letter-spacing:-0.26px">Get Premium</div>
<div class="abs" style="left:649px;top:1307px;width:3px;height:20px;background:#2ecc71"></div>
<div class="fl" style="left:657.4px;letter-spacing:0.12px">Your Account</div>
<div class="abs" style="left:765px;top:1307px;width:3px;height:20px;background:#2ecc71"></div>
<div class="fl" style="left:773.4px;letter-spacing:-0.35px">Forum</div>
<div class="abs" style="left:1023px;top:1295px;width:228px;height:30px;border:1px solid #8c8f94;border-radius:4px;background:#fff;color:#646970;font-size:14px;line-height:28px;padding-left:8px;letter-spacing:0.2px">Your email</div>
<div class="abs" style="left:1257px;top:1296px;width:187px;height:27px;background:#74ba92;color:#fff;font-size:14px;line-height:29px;text-align:center;letter-spacing:0.3px">Get news and promotions</div>
<div class="abs" style="left:1022px;top:1325px;font-size:13px;line-height:17px;color:#bbb;white-space:nowrap;letter-spacing:0.5px">Proceeding you agree to the <span style="color:#2ecc71">privacy policy</span></div>
<div class="abs" style="left:180px;top:1342px;font-size:13px;line-height:18px;color:#50575e;font-style:italic;white-space:nowrap">Thank you for creating with <span style="color:#2271b1;text-decoration:underline">WordPress</span>.</div>
<div class="abs" style="right:20px;top:1342px;font-size:13px;line-height:18px;color:#50575e;white-space:nowrap">Version 6.9.4</div>
</div>
</body>
</html>
